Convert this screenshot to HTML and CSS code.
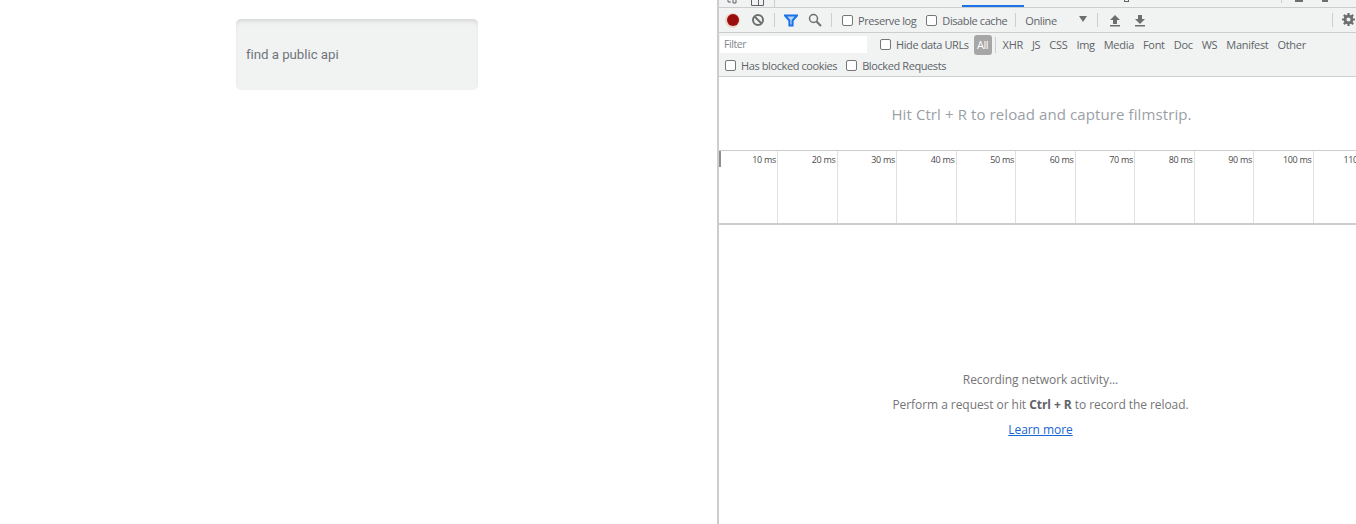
FILE: index.html
```html
<!DOCTYPE html>
<html lang="en">
<head>
<meta charset="utf-8">
<title>find a public api</title>
<link rel="stylesheet" href="styles.css">
</head>
<body>
<div class="page">
  <main class="app">
    <div class="search-box"><span class="search-label">find a public api</span></div>
  </main>
  <section class="devtools">
    <div class="tabs">
      <svg class="tab-ico t1" width="12" height="4" viewBox="0 0 12 4"><path d="M1 0v2h3M6 0v3l3 0V0" fill="none" stroke="#5f6368"/></svg>
      <svg class="tab-ico t2" width="13" height="6" viewBox="0 0 13 6"><path d="M.5 0v5.500h12V0M7.500 0v5" fill="none" stroke="#5f6368"/></svg>
      <span class="tab-sep t3"></span>
      <span class="tab-active"></span>
      <span class="tab-bits t4"></span>
      <span class="tab-sep t5"></span>
      <span class="tab-dot t6"></span>
      <span class="tab-dot t7"></span>
    </div>
    <div class="toolbar">
      <span class="record"><span class="record-dot"></span></span>
      <svg class="ico clear" width="14" height="14" viewBox="0 0 14 14"><circle cx="7" cy="7" r="5" fill="none" stroke="#6e6e6e" stroke-width="2"/><path d="M3.500 3.500l7 7" stroke="#6e6e6e" stroke-width="2"/></svg>
      <span class="sep s1"></span>
      <svg class="ico funnel" width="14" height="13" viewBox="0 0 14 13"><path d="M1 1.500h12L8.600 6.500v5H5.400v-5z" fill="#bcd6f7" stroke="#1a73e8" stroke-width="2"/></svg>
      <svg class="ico lens" width="14" height="14" viewBox="0 0 14 14"><circle cx="5.500" cy="5.500" r="4" fill="none" stroke="#6e6e6e" stroke-width="1.500"/><path d="M8.500 8.500l4.500 4.500" stroke="#6e6e6e" stroke-width="2"/></svg>
      <span class="sep s2"></span>
      <label class="check c1"><span class="box"></span>Preserve log</label>
      <label class="check c2"><span class="box"></span>Disable cache</label>
      <span class="sep s3"></span>
      <span class="throttle">Online</span>
      <span class="caret"></span>
      <span class="sep s4"></span>
      <svg class="ico up" width="12" height="13" viewBox="0 0 12 13"><path d="M6 1l5 5H8v4H4V6H1zM1 11h10v1.500H1z" fill="#6e6e6e"/></svg>
      <svg class="ico down" width="12" height="13" viewBox="0 0 12 13"><path d="M4 1h4v4h3l-5 5-5-5h3zM1 11h10v1.500H1z" fill="#6e6e6e"/></svg>
      <span class="sep s5"></span>
      <svg class="ico gear" width="13" height="13" viewBox="0 0 14 14"><circle cx="7" cy="7" r="3.700" fill="none" stroke="#6e6e6e" stroke-width="3"/><path d="M7 0v3M7 11v3M0 7h3M11 7h3M2 2l2 2M10 10l2 2M12 2l-2 2M4 10l-2 2" stroke="#6e6e6e" stroke-width="2.400"/></svg>
    </div>
    <div class="filters">
      <div class="filter-row">
        <span class="filter-input">Filter</span>
        <label class="check c3"><span class="box"></span>Hide data URLs</label>
        <span class="all">All</span>
        <span class="sep s6"></span>
        <span class="type first">XHR</span>
        <span class="type">JS</span>
        <span class="type">CSS</span>
        <span class="type">Img</span>
        <span class="type">Media</span>
        <span class="type">Font</span>
        <span class="type">Doc</span>
        <span class="type">WS</span>
        <span class="type">Manifest</span>
        <span class="type">Other</span>
      </div>
      <div class="blocked-row">
        <label class="check c4"><span class="box"></span>Has blocked cookies</label>
        <label class="check c5"><span class="box"></span>Blocked Requests</label>
      </div>
    </div>
    <div class="film-hint">Hit Ctrl + R to reload and capture filmstrip.</div>
    <div class="timeline">
      <span class="origin"></span>
      <div class="tick">10 ms</div>
      <div class="tick">20 ms</div>
      <div class="tick">30 ms</div>
      <div class="tick">40 ms</div>
      <div class="tick">50 ms</div>
      <div class="tick">60 ms</div>
      <div class="tick">70 ms</div>
      <div class="tick">80 ms</div>
      <div class="tick">90 ms</div>
      <div class="tick">100 ms</div>
      <div class="tick last">110 ms</div>
    </div>
    <div class="empty">
      <p>Recording network activity...</p>
      <p>Perform a request or hit <b>Ctrl + R</b> to record the reload.</p>
      <p><a href="#">Learn more</a></p>
    </div>
  </section>
</div>
</body>
</html>
```
FILE: styles.css
```css
* { box-sizing: border-box; }
html, body { margin: 0; height: 100%; overflow: hidden; background: #fff; }
.page { display: flex; width: 1356px; height: 524px; }

.app { width: 717px; flex: none; padding: 19px 0 0 236px; }
.search-box {
  width: 242px; height: 71px; padding: 0 0 0 10px;
  display: flex; align-items: center;
  background: #f1f3f3; border-radius: 5px;
  box-shadow: inset 0 4px 4px -2px #d4d4d4;
}
.search-label { font: 400 13.300px Roboto, sans-serif; letter-spacing: -0.05px; color: #70757a; }

.devtools {
  width: 639px; flex: none; position: relative; overflow: hidden;
  border-left: 2px solid #cbcdcf;
  font-family: "Open Sans", sans-serif; font-size: 11px; letter-spacing: -0.4px; color: #5f6368;
  display: flex; flex-direction: column;
}

.tabs { height: 8px; flex: none; position: relative; background: #f1f3f3; border-bottom: 1px solid #cbcdcf; }
.tab-ico, .tab-sep, .tab-active, .tab-dot, .tab-bits { position: absolute; top: 0; }
.t1 { left: 8px; }
.t2 { left: 32px; }
.tab-sep { width: 1px; height: 7px; background: #cbcdcf; }
.t3 { left: 55px; }
.t5 { left: 562px; top: 0; height: 3px; }
.tab-active { left: 243px; width: 62px; top: 5px; height: 2px; background: #1a73e8; }
.t4 { left: 405px; width: 5px; height: 2px; border: 1px solid #5f6368; border-top: 0; }
.tab-dot { height: 2px; background: #6e6e6e; }
.t6 { left: 576px; width: 8px; }
.t7 { left: 603px; width: 6px; }

.toolbar { height: 25px; flex: none; position: relative; display: flex; align-items: center; background: #f1f3f3; border-bottom: 1px solid #cbcdcf; }
.record { margin-left: 6px; width: 15px; height: 15px; border-radius: 50%; background: #ecd6cc; display: flex; align-items: center; justify-content: center; flex: none; }
.record-dot { width: 12px; height: 12px; border-radius: 50%; background: #9b0c0c; }
.ico { flex: none; display: block; }
.clear { margin-left: 11px; }
.sep { width: 1px; height: 14px; background: #cbcdcf; flex: none; }
.s1 { margin-left: 9px; }
.funnel { margin-left: 9px; }
.lens { margin-left: 10px; }
.s2 { margin-left: 9px; }
.check { display: flex; align-items: center; white-space: nowrap; flex: none; }
.box { width: 11px; height: 11px; border: 1px solid #767676; border-radius: 2px; background: #fff; flex: none; margin-right: 5px; }
.c1 { margin-left: 10px; }
.c2 { margin-left: 10px; }
.s3 { margin-left: 8px; }
.throttle { margin-left: 9px; width: 48px; flex: none; }
.caret { width: 0; height: 0; flex: none; margin-left: 6px; margin-bottom: 2px; border: 4px solid transparent; border-top: 6px solid #6e6e6e; border-bottom: 0; }
.s4 { margin-left: 10px; }
.up { margin-left: 11px; }
.down { margin-left: 13px; }
.s5 { position: absolute; left: 613px; top: 5px; }
.gear { position: absolute; left: 623px; top: 5px; }

.filters { height: 44px; flex: none; background: #f1f3f3; border-bottom: 1px solid #cbcdcf; }
.filter-row { height: 23px; display: flex; align-items: center; }
.filter-input { width: 147px; height: 17px; margin-left: 1px; padding-left: 4px; background: #fff; color: #80868b; font-size: 10.500px; line-height: 16px; flex: none; }
.c3 { margin-left: 13px; }
.all { margin-left: 5px; width: 18px; height: 20px; background: #a6a6a6; color: #fff; border-radius: 3px; text-align: center; line-height: 20px; flex: none; }
.s6 { margin-left: 3px; height: 16px; }
.type { margin-left: 9px; flex: none; white-space: nowrap; letter-spacing: -0.3px; }
.type.first { margin-left: 7px; }
.blocked-row { height: 18px; display: flex; align-items: center; }
.c4 { margin-left: 6px; }
.c5 { margin-left: 9px; }

.film-hint { height: 74px; flex: none; padding: 26px 0 0 8px; text-align: center; font-size: 15px; letter-spacing: 0.1px; line-height: 22px; color: #9aa0a6; border-bottom: 1px solid #cbcdcf; }

.timeline { height: 74px; flex: none; position: relative; display: flex; border-bottom: 2px solid #cbcdcf; }
.origin { position: absolute; left: 0; top: 0; width: 2px; height: 16px; background: #8f8f8f; }
.tick { width: 59.500px; flex: none; border-right: 1px solid #e0e0e0; text-align: right; padding: 3px 1px 0 0; font-size: 9px; letter-spacing: -0.3px; line-height: 12px; color: #4a4a4a; white-space: nowrap; }
.tick:nth-child(2) { width: 59px; }
.tick.last { border-right: 0; }

.empty { flex: 1; padding: 142px 0 0 6px; text-align: center; font-size: 12px; letter-spacing: -0.06px; color: #757575; }
.empty p { margin: 0; height: 25px; line-height: 25px; }
.empty b { color: #5f6368; }
.empty a { color: #1967d2; text-decoration: underline; }
```
